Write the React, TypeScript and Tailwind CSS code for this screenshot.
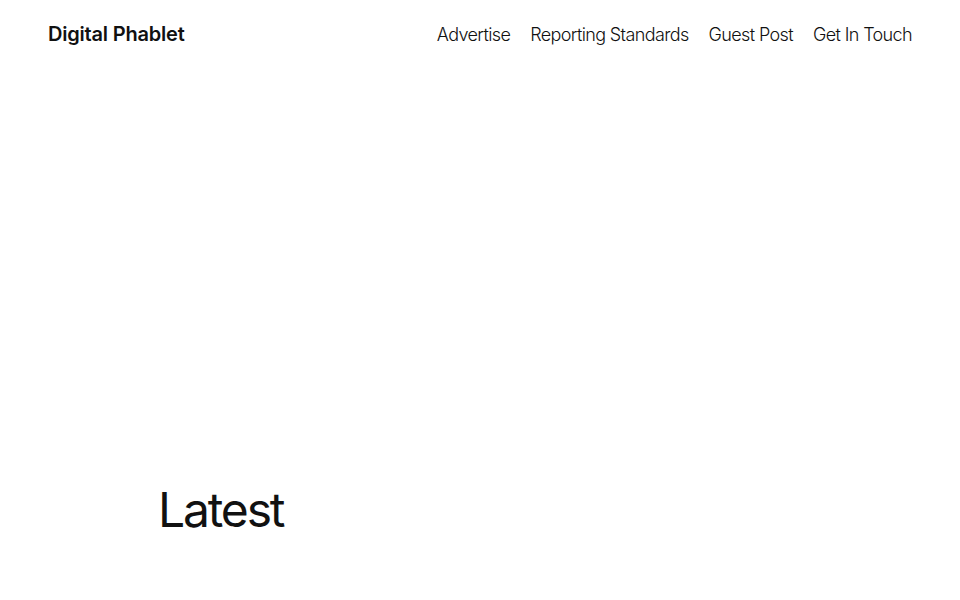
export default function App() {
  const links = ['Advertise', 'Reporting Standards', 'Guest Post', 'Get In Touch'];
  return (
    <div className="min-h-screen bg-white text-[#111111] font-['Inter',sans-serif]">
      <header className="flex items-center justify-between px-12 pt-[20px] h-[68px] pb-[20px]">
        <a className="text-[20px] font-semibold tracking-[-0.01em]">Digital Phablet</a>
        <nav className="flex items-center gap-[20px] text-[18px] font-light tracking-[-0.035em]">
          {links.map((l) => (
            <a key={l}>{l}</a>
          ))}
        </nav>
      </header>
      <main className="pt-[418px] px-[158px]">
        <h2 className="text-[48px] leading-none font-normal tracking-[-0.045em]">Latest</h2>
      </main>
    </div>
  );
}
